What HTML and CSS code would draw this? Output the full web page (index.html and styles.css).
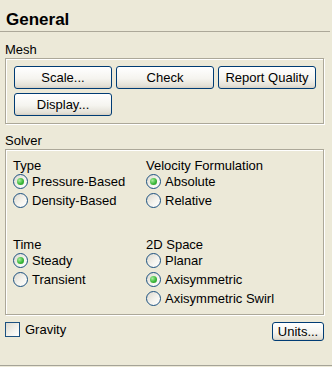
FILE: index.html
```html
<!DOCTYPE html>
<html lang="en">
<head>
    <meta charset="UTF-8">
    <title>General</title>
    <link rel="stylesheet" href="styles.css">
</head>
<body>
    <div class="panel">
        <h1 class="title">General</h1>

        <div class="section-label">Mesh</div>
        <div class="group mesh">
            <div class="button-row">
                <button class="btn">Scale...</button>
                <button class="btn">Check</button>
                <button class="btn">Report Quality</button>
            </div>
            <div class="button-row">
                <button class="btn">Display...</button>
            </div>
        </div>

        <div class="section-label solver-label">Solver</div>
        <div class="group solver">
            <div class="field">
                <div class="field-label">Type</div>
                <div class="radio"><span class="radio-dot checked"></span>Pressure-Based</div>
                <div class="radio"><span class="radio-dot"></span>Density-Based</div>
            </div>
            <div class="field">
                <div class="field-label">Velocity Formulation</div>
                <div class="radio"><span class="radio-dot checked"></span>Absolute</div>
                <div class="radio"><span class="radio-dot"></span>Relative</div>
            </div>
            <div class="field">
                <div class="field-label">Time</div>
                <div class="radio"><span class="radio-dot checked"></span>Steady</div>
                <div class="radio"><span class="radio-dot"></span>Transient</div>
            </div>
            <div class="field">
                <div class="field-label">2D Space</div>
                <div class="radio"><span class="radio-dot"></span>Planar</div>
                <div class="radio"><span class="radio-dot checked"></span>Axisymmetric</div>
                <div class="radio"><span class="radio-dot"></span>Axisymmetric Swirl</div>
            </div>
        </div>

        <div class="footer">
            <label class="check"><span class="check-box"></span>Gravity</label>
            <button class="btn units">Units...</button>
        </div>
    </div>
</body>
</html>
```

FILE: styles.css
```css
body {
    margin: 0;
    background-color: #ece9d8;
    font-family: "Liberation Sans", Arial, sans-serif;
    font-size: 13px;
    color: #000;
}

.panel {
    height: 365px;
    border-bottom: 1px solid #a5a397;
    display: flex;
    flex-direction: column;
}

.title {
    margin: 0 2px 0 0;
    padding: 10px 6px 1px;
    font-size: 17px;
    line-height: 20px;
    font-weight: bold;
    border-bottom: 1px solid #aca899;
}

.section-label {
    margin-top: 10px;
    margin-bottom: 1px;
    padding-left: 5px;
    line-height: 15px;
}

.solver-label {
    margin-top: 9px;
}

.group {
    margin: 0 8px 0 5px;
    border: 1px solid #aca899;
    box-shadow: inset 1px 1px 0 #fff, 1px 1px 0 #fff;
}

.mesh {
    display: flex;
    flex-direction: column;
    gap: 4px;
    padding: 7px 7px 7px 8px;
}

.button-row {
    display: flex;
    gap: 4px;
}

.btn {
    width: 98px;
    height: 23px;
    padding: 0;
    font: inherit;
    color: #000;
    border: 1px solid #003c74;
    border-radius: 3px;
    background: linear-gradient(#ffffff, #f5f4ef 55%, #e3e0d6 90%, #d6d0c5);
    box-shadow: inset 0 -1px 0 #d8d2c6;
}

.solver {
    display: grid;
    grid-template-columns: 133px 1fr;
    row-gap: 28px;
    padding: 9px 7px 6px 7px;
}

.field-label {
    line-height: 13px;
}

.radio {
    display: flex;
    align-items: center;
    gap: 4px;
    height: 19px;
}

.radio-dot {
    position: relative;
    width: 13px;
    height: 13px;
    border: 1px solid #1c5180;
    border-radius: 50%;
    background: linear-gradient(135deg, #dcd9cf, #f6f5f0 60%, #ffffff);
}

.radio-dot.checked::after {
    content: "";
    position: absolute;
    top: 3px;
    left: 3px;
    width: 7px;
    height: 7px;
    border-radius: 50%;
    background: radial-gradient(circle at 35% 35%, #a8ec9c, #3cb93c 55%, #1d8a1d);
}

.footer {
    display: flex;
    justify-content: space-between;
    align-items: flex-start;
    padding: 6px 8px 0 5px;
}

.check {
    display: flex;
    align-items: center;
    gap: 5px;
    height: 16px;
}

.check-box {
    width: 13px;
    height: 13px;
    border: 1px solid #1c5180;
    background: linear-gradient(135deg, #dcdad0, #f4f3ee 60%, #ffffff);
}

.btn.units {
    width: 52px;
    height: 19px;
    margin-top: 1px;
}
```
